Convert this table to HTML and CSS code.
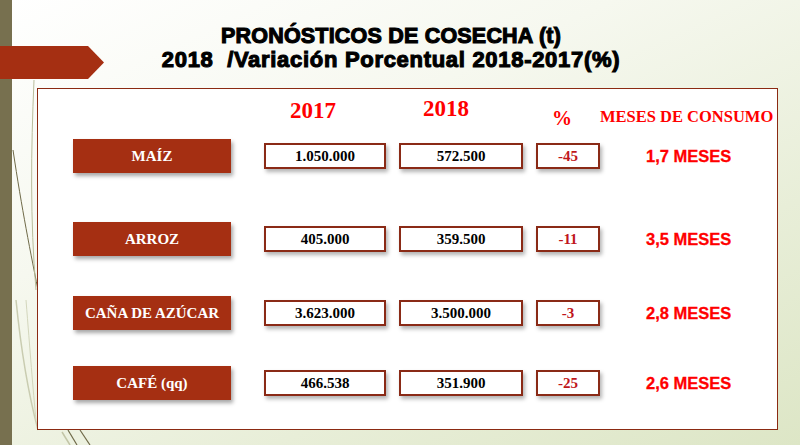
FILE: index.html
```html
<!DOCTYPE html>
<html lang="es">
<head>
<meta charset="utf-8">
<title>Pronósticos de cosecha</title>
<link rel="stylesheet" href="styles.css">
</head>
<body>
<div class="slide">
  <div class="sidebar"></div>
  <svg class="wisp" width="130" height="445" viewBox="0 0 130 445" aria-hidden="true">
    <path d="M13 150 C 22 210, 30 250, 40 300" stroke="#6f6a48" stroke-width="1" fill="none"/>
    <path d="M34 80 C 31 150, 30 220, 36 290" stroke="#b9bd9c" stroke-width="1" fill="none"/>
    <path d="M16 300 C 22 360, 30 400, 38 430" stroke="#c9ccb0" stroke-width="1.5" fill="none"/>
    <path d="M26 300 C 30 350, 33 390, 36 420" stroke="#d3d6bc" stroke-width="1" fill="none"/>
    <path d="M62 432 L 70 445" stroke="#c2c5a6" stroke-width="1.5" fill="none"/>
    <path d="M68 430 L 77 445" stroke="#6f6a48" stroke-width="1.2" fill="none"/>
    <path d="M80 430 L 90 445" stroke="#6f6a48" stroke-width="1.2" fill="none"/>
  </svg>
  <div class="tab"></div>

  <header class="title">
    <div class="t1">PRONÓSTICOS DE COSECHA (t)</div>
    <div class="t2">2018&nbsp; /Variación Porcentual 2018-2017(%)</div>
  </header>

  <section class="panel">
    <div class="heads">
      <div></div>
      <div class="h h2017">2017</div>
      <div class="h h2018">2018</div>
      <div class="h hpct">%</div>
      <div class="h hmeses">MESES DE CONSUMO</div>
    </div>
    <div class="rows">
      <div class="row">
        <div class="label">MAÍZ</div>
        <div class="box w17">1.050.000</div>
        <div class="box w18">572.500</div>
        <div class="box wpct">-45</div>
        <div class="meses">1,7 MESES</div>
      </div>
      <div class="row">
        <div class="label">ARROZ</div>
        <div class="box w17">405.000</div>
        <div class="box w18">359.500</div>
        <div class="box wpct">-11</div>
        <div class="meses">3,5 MESES</div>
      </div>
      <div class="row">
        <div class="label">CAÑA DE AZÚCAR</div>
        <div class="box w17">3.623.000</div>
        <div class="box w18">3.500.000</div>
        <div class="box wpct">-3</div>
        <div class="meses">2,8 MESES</div>
      </div>
      <div class="row">
        <div class="label">CAFÉ (qq)</div>
        <div class="box w17">466.538</div>
        <div class="box w18">351.900</div>
        <div class="box wpct">-25</div>
        <div class="meses">2,6 MESES</div>
      </div>
    </div>
  </section>
</div>
</body>
</html>
```

FILE: styles.css
```css
* { box-sizing: border-box; }

html, body {
  margin: 0;
  padding: 0;
}

body {
  width: 800px;
  height: 445px;
  overflow: hidden;
  font-family: "Liberation Serif", "Times New Roman", serif;
}

.slide {
  position: relative;
  isolation: isolate;
  width: 800px;
  height: 445px;
  overflow: hidden;
  background: linear-gradient(155deg, #ffffff 0%, #f6f8ef 35%, #e8eed8 70%, #dde6c6 100%);
}

.sidebar {
  position: absolute;
  left: 0;
  top: 0;
  width: 12px;
  height: 445px;
  background: #77704f;
  z-index: -1;
}

.wisp {
  position: absolute;
  left: 0;
  top: 0;
  z-index: -1;
}

.tab {
  position: absolute;
  left: 0;
  top: 46px;
  width: 104px;
  height: 33px;
  background: #a52f12;
  clip-path: polygon(0 0, 88px 0, 100% 50%, 88px 100%, 0 100%);
}

.title {
  padding: 25px 18px 0 0;
  text-align: center;
  font-family: "Liberation Sans", Arial, sans-serif;
  font-weight: bold;
  color: #000;
  line-height: 23px;
  -webkit-text-stroke: 1.1px #000;
}

.t1 {
  font-size: 21.5px;
  letter-spacing: 0.2px;
}

.t2 {
  font-size: 22px;
  letter-spacing: 0.7px;
}

.panel {
  margin: 17px 0 0 37px;
  width: 741px;
  height: 342px;
  background: #ffffff;
  border: 1px solid #8b2a12;
  padding-left: 35px;
}

.heads,
.row {
  display: grid;
  grid-template-columns: 191px 135px 137px 64px 1fr;
}

.heads {
  height: 50px;
  align-items: start;
  color: #ff0000;
  font-weight: bold;
  white-space: nowrap;
}

.h {
  line-height: 25px;
}

.h2017 {
  font-size: 23px;
  margin: 9px 0 0 26px;
}

.h2018 {
  font-size: 23px;
  margin: 7px 0 0 24px;
}

.hpct {
  font-size: 20px;
  margin: 17px 0 0 16px;
}

.hmeses {
  font-size: 16.5px;
  margin: 15px 0 0 0;
}

.rows {
  display: grid;
  grid-template-rows: 83px 74px 70px 34px;
}

.row {
  height: 34px;
  align-items: center;
}

.label {
  width: 158px;
  height: 34px;
  display: flex;
  align-items: center;
  justify-content: center;
  background: #a52f12;
  color: #ffffff;
  font-weight: bold;
  font-size: 15px;
  white-space: nowrap;
  box-shadow: 2px 3px 4px rgba(0, 0, 0, 0.35);
}

.box {
  height: 26px;
  display: flex;
  align-items: center;
  justify-content: center;
  background: #ffffff;
  border: 2px solid #8a2a16;
  box-shadow: 2px 3px 4px rgba(0, 0, 0, 0.3);
  font-weight: bold;
  font-size: 15px;
  color: #000;
}

.w17 { width: 122px; }
.w18 { width: 124px; }
.wpct { width: 64px; color: #c0161b; }

.meses {
  padding-left: 46px;
  font-family: "Liberation Sans", Arial, sans-serif;
  font-weight: bold;
  font-size: 16.5px;
  color: #ff0000;
  white-space: nowrap;
  -webkit-text-stroke: 0.3px #ff0000;
}
```
